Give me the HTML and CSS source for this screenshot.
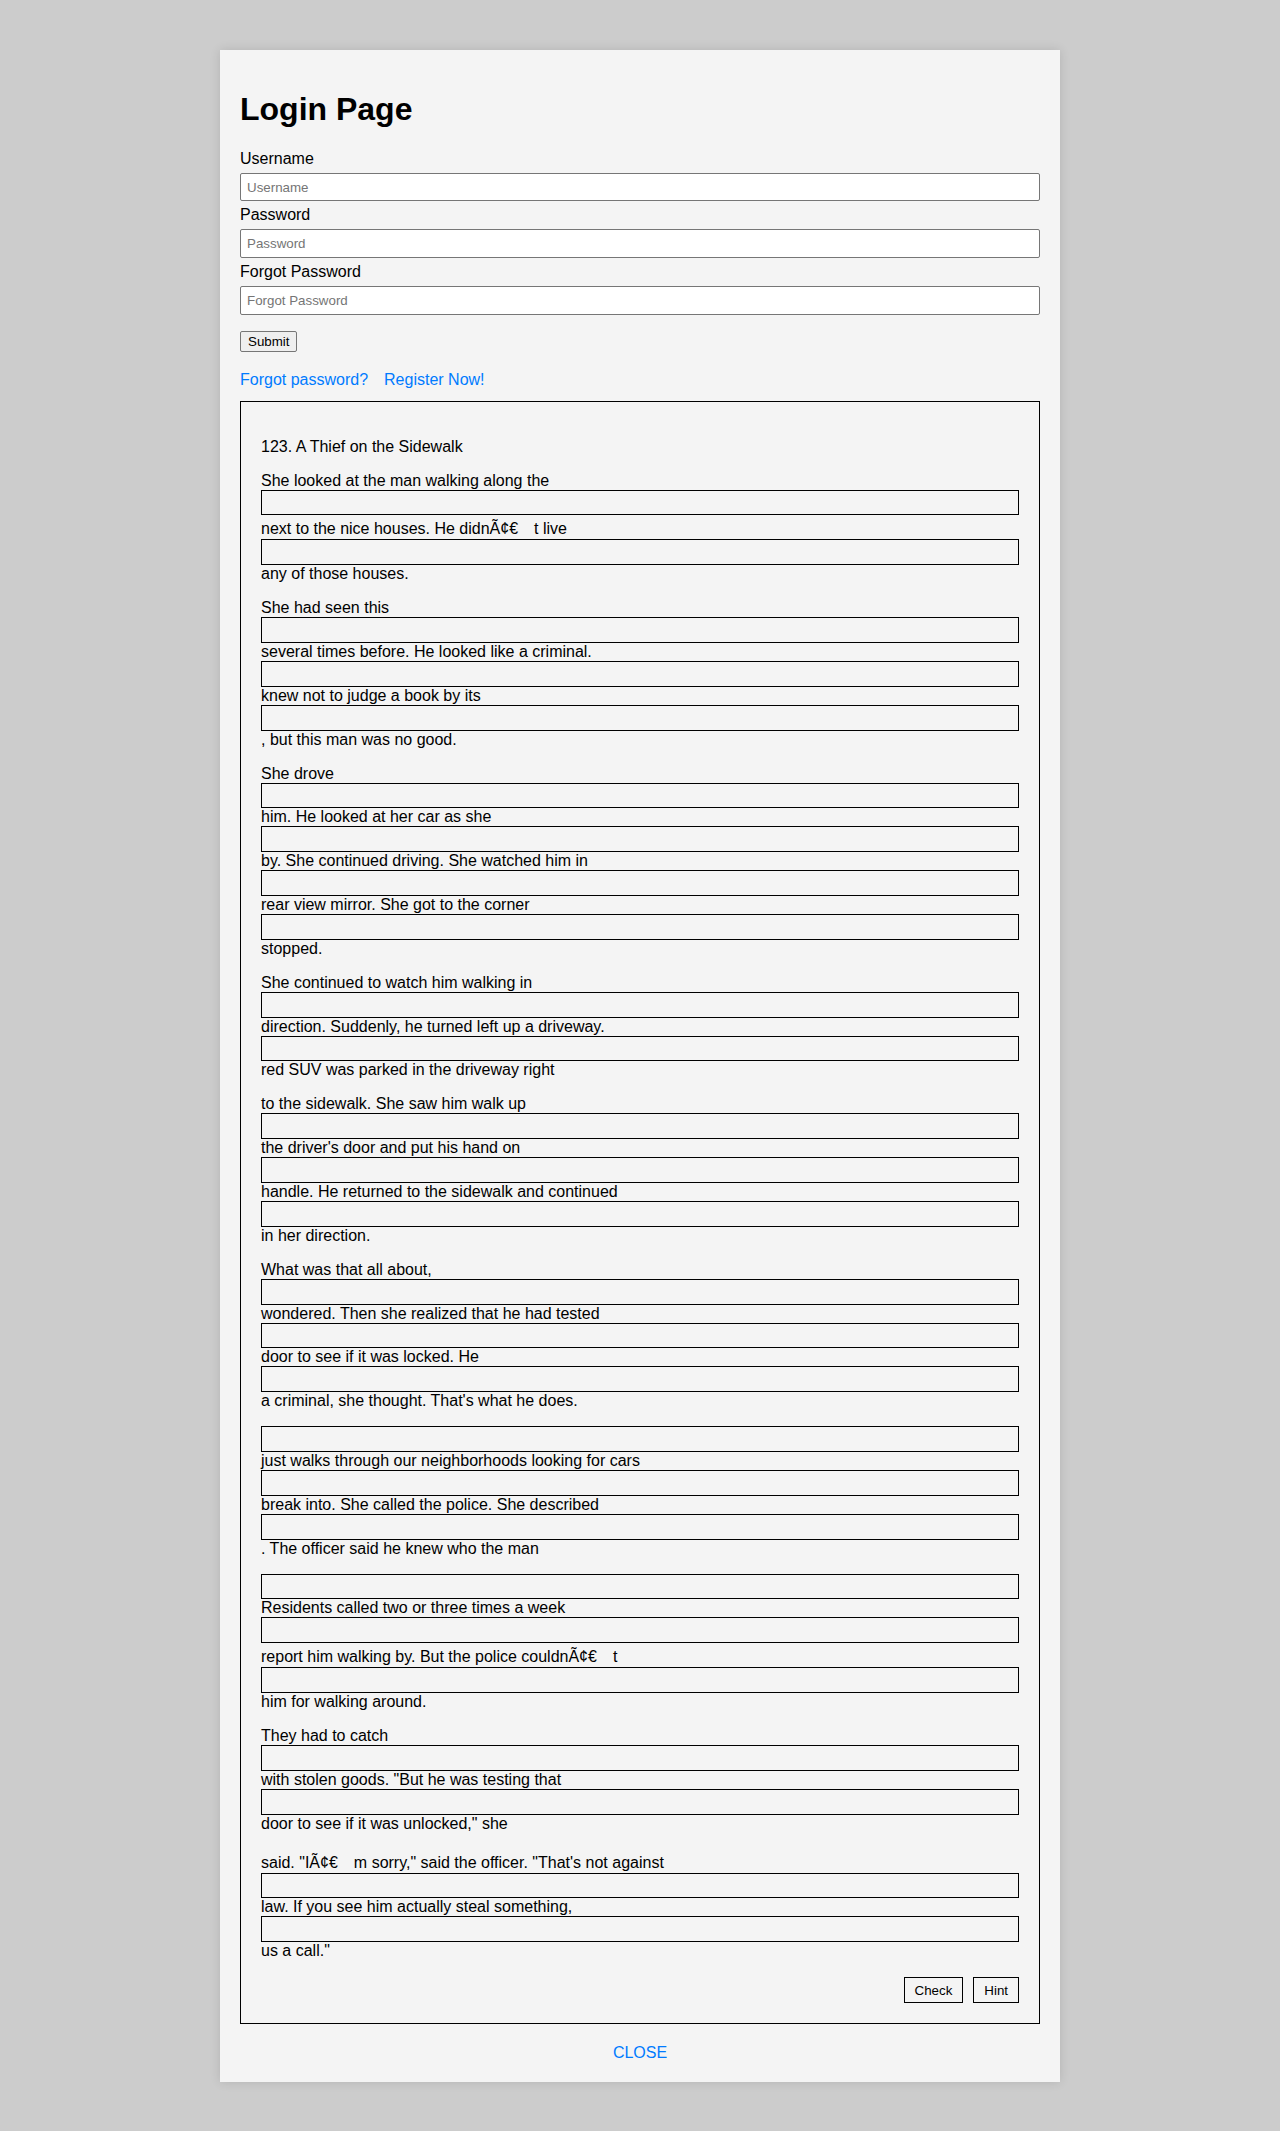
FILE: index.html
```html
<!DOCTYPE html>
<html lang="en">
<head>
<meta charset="utf-8">
<title>Login Page</title>
<link rel="stylesheet" href="styles.css">
</head>
<body>
<div class="card">
  <h1 class="title">Login Page</h1>
  <form class="login-form">
    <label class="field-label" for="username">Username</label>
    <input class="field-input" id="username" type="text" placeholder="Username">
    <label class="field-label" for="password">Password</label>
    <input class="field-input" id="password" type="password" placeholder="Password">
    <label class="field-label" for="forgot">Forgot Password</label>
    <input class="field-input" id="forgot" type="text" placeholder="Forgot Password">
    <div class="submit-row"><button type="button" class="submit-btn">Submit</button></div>
  </form>
  <div class="links"><a href="#" class="link link-first">Forgot password?</a><a href="#" class="link">Register Now!</a></div>
  <div class="story">
    <p class="story-title">123. A Thief on the Sidewalk</p>
    <p class="para">She looked at the man walking along the<input class="blank" type="text">next to the nice houses. He didnÃ¢€<span class="gap">　</span>t live<input class="blank" type="text">any of those houses.</p>
    <p class="para">She had seen this<input class="blank" type="text">several times before. He looked like a criminal.<input class="blank" type="text">knew not to judge a book by its<input class="blank" type="text">, but this man was no good.</p>
    <p class="para">She drove<input class="blank" type="text">him. He looked at her car as she<input class="blank" type="text">by. She continued driving. She watched him in<input class="blank" type="text">rear view mirror. She got to the corner<input class="blank" type="text">stopped.</p>
    <p class="para">She continued to watch him walking in<input class="blank" type="text">direction. Suddenly, he turned left up a driveway.<input class="blank" type="text">red SUV was parked in the driveway right</p>
    <p class="para">to the sidewalk. She saw him walk up<input class="blank" type="text">the driver's door and put his hand on<input class="blank" type="text">handle. He returned to the sidewalk and continued<input class="blank" type="text">in her direction.</p>
    <p class="para">What was that all about,<input class="blank" type="text">wondered. Then she realized that he had tested<input class="blank" type="text">door to see if it was locked. He<input class="blank" type="text">a criminal, she thought. That's what he does.</p>
    <p class="para"><input class="blank" type="text">just walks through our neighborhoods looking for cars<input class="blank" type="text">break into. She called the police. She described<input class="blank" type="text">. The officer said he knew who the man</p>
    <p class="para"><input class="blank" type="text">Residents called two or three times a week<input class="blank" type="text">report him walking by. But the police couldnÃ¢€<span class="gap">　</span>t<input class="blank" type="text">him for walking around.</p>
    <p class="para">They had to catch<input class="blank" type="text">with stolen goods. "But he was testing that<input class="blank" type="text">door to see if it was unlocked," she</p>
    <p class="para">said. "IÃ¢€<span class="gap">　</span>m sorry," said the officer. "That's not against<input class="blank" type="text">law. If you see him actually steal something,<input class="blank" type="text">us a call."</p>
    <div class="actions">
      <button type="button" class="action-btn">Check</button>
      <button type="button" class="action-btn">Hint</button>
    </div>
  </div>
  <div class="close-row"><a href="#" class="link">CLOSE</a></div>
</div>
</body>
</html>
```
FILE: styles.css
```css
* {
  box-sizing: border-box;
}

html,
body {
  margin: 0;
}

body {
  background: #cccccc;
  font-family: "Liberation Sans", Arial, sans-serif;
  font-size: 16px;
  color: #000;
  padding: 50px 0;
}

.card {
  width: 840px;
  margin: 0 auto;
  background: #f4f4f4;
  padding: 20px;
  box-shadow: 0 0 10px rgba(0, 0, 0, 0.12);
}

.title {
  font-size: 32px;
  font-weight: bold;
  line-height: normal;
  margin: 21.44px 0;
}

.login-form {
  margin: 0;
}

.field-label {
  display: block;
  margin-bottom: 5px;
}

.field-input {
  display: block;
  width: 100%;
  height: 28.6px;
  padding: 0 6px;
  margin: 0 0 5px;
  border: 1px solid #767676;
  border-radius: 2px;
  background: #fff;
  font-family: "Liberation Sans", Arial, sans-serif;
  font-size: 13.33px;
  color: #000;
}

.field-input::placeholder {
  color: #757575;
}

.submit-row {
  padding-top: 11px;
}

.submit-btn {
  font-family: "Liberation Sans", Arial, sans-serif;
  font-size: 13.33px;
  line-height: normal;
  padding: 2px 7px;
  border: 1px solid #767676;
  border-radius: 2px;
  background: #efefef;
  color: #000;
}

.links {
  margin: 19px 0 12px;
}

.link {
  color: #007bff;
  text-decoration: none;
}

.link-first {
  margin-right: 16px;
}

.story {
  border: 1px solid #000;
  padding: 20px 20px 20px;
}

.story-title {
  margin: 0 0 16px;
  padding-top: 16px;
}

.para {
  margin: 16px 0;
}

.gap {
  font-family: "Noto Sans CJK JP", sans-serif;
}

.blank {
  display: block;
  width: 100%;
  height: 25.8px;
  padding: 4px;
  margin: 0;
  border: 1px solid #000;
  background: transparent;
  font-family: "Liberation Sans", Arial, sans-serif;
  font-size: 13.33px;
}

.actions {
  display: flex;
  justify-content: flex-end;
  gap: 10px;
  margin-top: 17px;
}

.action-btn {
  font-family: "Liberation Sans", Arial, sans-serif;
  font-size: 13.33px;
  line-height: normal;
  padding: 4.5px 10px;
  border: 1px solid #000;
  border-radius: 0;
  background: transparent;
  color: #000;
}

.close-row {
  margin-top: 20px;
  text-align: center;
}
```
